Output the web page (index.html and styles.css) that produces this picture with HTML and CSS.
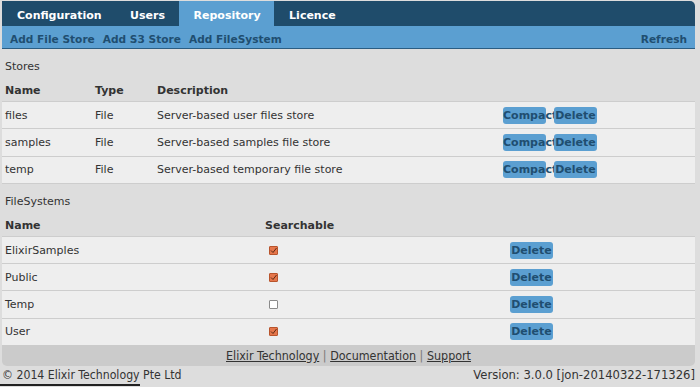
FILE: index.html
```html
<!DOCTYPE html>
<html lang="en">
<head>
	<meta charset="UTF-8">
	<title>Elixir Repository</title>
	<link rel="stylesheet" href="styles.css">
</head>
<body>
	<div id="main">
		<div class="tabs">
			<a class="tab">Configuration</a>
			<a class="tab">Users</a>
			<a class="tab active">Repository</a>
			<a class="tab">Licence</a>
		</div>

		<div class="toolbar">
			<div class="toolbar-left">
				<a>Add File Store</a>
				<a>Add S3 Store</a>
				<a>Add FileSystem</a>
			</div>
			<a>Refresh</a>
		</div>

		<div class="section-title">Stores</div>
		<div class="row stores head">
			<div>Name</div><div>Type</div><div>Description</div><div></div>
		</div>
		<div class="row stores">
			<div>files</div><div>File</div><div>Server-based user files store</div>
			<div><span class="btn">Compact</span><span class="btn">Delete</span></div>
		</div>
		<div class="row stores">
			<div>samples</div><div>File</div><div>Server-based samples file store</div>
			<div><span class="btn">Compact</span><span class="btn">Delete</span></div>
		</div>
		<div class="row stores last">
			<div>temp</div><div>File</div><div>Server-based temporary file store</div>
			<div><span class="btn">Compact</span><span class="btn">Delete</span></div>
		</div>

		<div class="section-title">FileSystems</div>
		<div class="row fs head">
			<div>Name</div><div>Searchable</div><div></div>
		</div>
		<div class="row fs">
			<div>ElixirSamples</div><div><span class="check on"></span></div>
			<div><span class="btn">Delete</span></div>
		</div>
		<div class="row fs">
			<div>Public</div><div><span class="check on"></span></div>
			<div><span class="btn">Delete</span></div>
		</div>
		<div class="row fs">
			<div>Temp</div><div><span class="check"></span></div>
			<div><span class="btn">Delete</span></div>
		</div>
		<div class="row fs">
			<div>User</div><div><span class="check on"></span></div>
			<div><span class="btn">Delete</span></div>
		</div>

		<div class="links">
			<a>Elixir Technology</a> | <a>Documentation</a> | <a>Support</a>
		</div>
	</div>

	<div class="bottom">
		<span>© 2014 Elixir Technology Pte Ltd</span>
		<span class="version">Version: 3.0.0 [jon-20140322-171326]</span>
	</div>
	<div class="strip"></div>
</body>
</html>
```

FILE: styles.css
```css
*{
	padding: 0;
	margin: 0;
	box-sizing: border-box;
}
body{
	background-color: #DDDDDD;
	font-family: "DejaVu Sans", Verdana, sans-serif;
	font-size: 11px;
	color: #333;
	cursor: default;
}
#main{
	margin: 1px 5px 0 2px;
}
.tabs{
	display: flex;
	height: 25px;
	overflow: hidden;
	background-color: #1F4C6B;
	border-top-right-radius: 5px;
}
.tab{
	padding: 5px 13.5px 0 15px;
	line-height: 20px;
	font-weight: bold;
	color: white;
}
.tab.active{
	background-color: #5B9FD1;
}
.toolbar{
	display: flex;
	justify-content: space-between;
	height: 23px;
	padding: 4px 8px 0 8px;
	line-height: 18px;
	background-color: #5B9FD1;
	border-bottom: 1px solid #2B5D82;
	font-size: 10.6px;
	font-weight: bold;
	color: #1F4E70;
}
.toolbar-left{
	display: flex;
	gap: 8px;
}
.section-title{
	padding: 10px 3px 5px;
	line-height: 16px;
}
.row{
	display: grid;
	align-items: center;
	padding-left: 3px;
	height: 27.3px;
	background-color: #EEEEEE;
	border-top: 1px solid #CDCDCD;
}
.row.head{
	height: 21px;
	background: none;
	border: none;
	font-weight: bold;
}
.row.last{
	height: 28.3px;
	border-bottom: 1px solid #CDCDCD;
}
.stores{
	grid-template-columns: 90px 62px 346px 1fr;
}
.fs{
	grid-template-columns: 260px 245px 1fr;
}
.btn{
	display: inline-block;
	width: 43px;
	height: 17px;
	line-height: 17px;
	margin-right: 8px;
	text-align: center;
	white-space: nowrap;
	background-color: #5B9FD1;
	border-radius: 3px;
	font-weight: bold;
	color: #1F4E70;
}
.check{
	display: block;
	width: 9px;
	height: 9px;
	margin-left: 4px;
	background-color: white;
	border: 1px solid #8A8A8A;
	border-radius: 1px;
}
.check.on{
	background-color: #E5764B;
	border-color: #B8542C;
	background-image: url("data:image/svg+xml,%3Csvg xmlns='http://www.w3.org/2000/svg' width='7' height='7'%3E%3Cpath d='M1 3.5 L3 5.5 L6.5 1' fill='none' stroke='%235a2a14' stroke-width='1'/%3E%3C/svg%3E");
}
.links{
	height: 21px;
	line-height: 21px;
	text-align: center;
	background-color: #CBCBCB;
	border-radius: 0 0 5px 5px;
	font-family: "DejaVu Sans Condensed", sans-serif;
	font-size: 12.4px;
	color: #777;
}
.links a{
	color: #333;
	text-decoration: underline;
}
.bottom{
	display: flex;
	justify-content: space-between;
	margin: 0 5px 0 2px;
	height: 18px;
	line-height: 18px;
	font-family: "DejaVu Sans Condensed", sans-serif;
	font-size: 12.2px;
	color: #333;
}
.version{
	font-size: 12.9px;
}
.strip{
	width: 140px;
	height: 2px;
	background-color: #222;
}
```
